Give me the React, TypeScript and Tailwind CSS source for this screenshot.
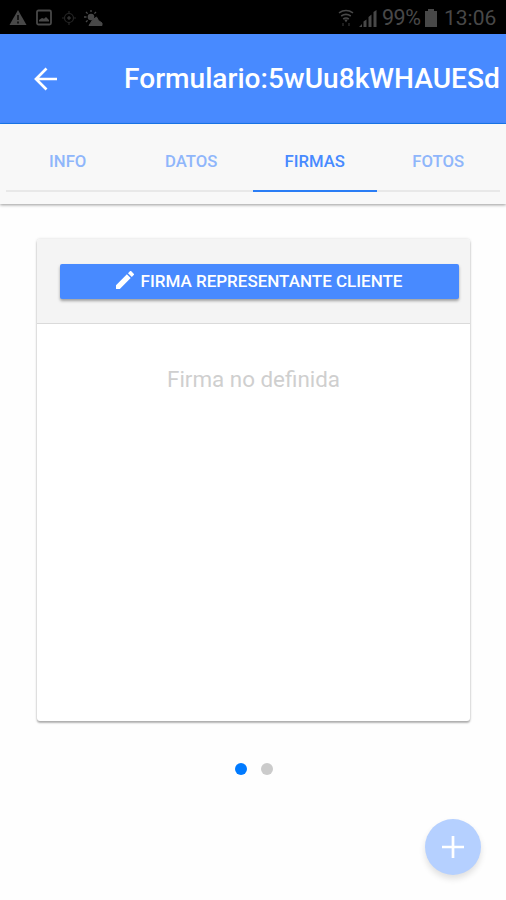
import { useState } from 'react';

const tabs = ['INFO', 'DATOS', 'FIRMAS', 'FOTOS'];

const slides = ['FIRMA REPRESENTANTE CLIENTE', 'FIRMA TÉCNICO'];

function StatusBar() {
  return (
    <div className="flex h-[34px] shrink-0 items-center justify-between bg-black pl-[9px] pr-[10px] pt-px text-[#484848]">
      <div className="flex items-center">
        <svg className="h-[17px] w-[18px]" viewBox="0 0 18 17">
          <path d="M9 1 17.5 16H.5Z" fill="currentColor" />
          <path d="M9 6v5M9 12.5v2" stroke="#111" strokeWidth="1.8" />
        </svg>
        <svg className="ml-[9px] h-[17px] w-[16px]" viewBox="0 0 16 17">
          <rect x="1" y="1.5" width="14" height="14" rx="1.5" fill="none" stroke="currentColor" strokeWidth="1.8" />
          <path d="M3 12.5V11l3-2 2 .8L10 8l3 3v1.5Z" fill="currentColor" />
        </svg>
        <svg className="ml-[10px] h-[14px] w-[14px]" viewBox="0 0 14 14" fill="none" stroke="#262626">
          <circle cx="7" cy="7" r="4.5" strokeWidth="1.2" />
          <circle cx="7" cy="7" r="1.4" fill="#3c3c3c" />
          <path d="M7 0v2.5M7 11.5V14M0 7h2.5M11.5 7H14" strokeWidth="1.2" />
        </svg>
        <svg className="ml-[8px] h-[16px] w-[19px]" viewBox="0 0 19 16">
          <circle cx="7" cy="7" r="3.3" fill="currentColor" />
          <path d="M7 0v2M2 2l1.6 1.6M0 7h2.5M2 12l1.6-1.6M12 2l-1.6 1.6" stroke="currentColor" strokeWidth="1.3" />
          <path d="M5 15.5 8.5 10l4-3 2 3.5 3.5 2.5v2.5Z" fill="currentColor" stroke="currentColor" strokeLinejoin="round" />
        </svg>
      </div>
      <div className="flex items-center">
        <svg className="mr-px h-[18px] w-[16px]" viewBox="0 0 16 18" fill="none" stroke="currentColor" strokeWidth="1.6">
          <path d="M1 3.8Q8-.8 15 3.8M3.2 7Q8 3.8 12.8 7M5.2 10Q8 8 10.8 10" />
          <path d="m6.2 10.5 1.8 3 1.8-3Z" fill="currentColor" stroke="none" />
          <path d="M5 14v3M11 14v3" stroke="#262626" />
        </svg>
        <svg className="ml-[4px] h-[18px] w-[18px]" viewBox="0 0 18 18" fill="currentColor">
          <path d="M0 18 3 15v3ZM4.5 12.5l3-2V18h-3ZM9.5 8l3-2.5V18h-3ZM14.5 3l3-2v17h-3Z" />
        </svg>
        <span className="ml-[5px] w-[39px] whitespace-nowrap text-[21.5px] leading-none tracking-[-0.5px]">99%</span>
        <svg className="ml-[4px] h-[18px] w-[12px]" viewBox="0 0 12 18" fill="currentColor">
          <path d="M3 0h6v2h3v16H0V2h3Z" />
        </svg>
        <span className="ml-[7px] mt-px w-[52px] whitespace-nowrap text-[21px] leading-none">13:06</span>
      </div>
    </div>
  );
}

export default function App() {
  const [activeTab, setActiveTab] = useState('FIRMAS');
  const [slide, setSlide] = useState(0);

  return (
    <div className="relative flex h-[900px] w-[506px] flex-col overflow-hidden bg-[#fefefe] font-['Roboto',sans-serif]">
      <StatusBar />

      {/* Toolbar */}
      <header className="flex h-[90px] shrink-0 items-center border-b border-[#1a7cf5] bg-[#488aff] text-white">
        <button className="ml-[34px] mt-px" aria-label="Volver">
          <svg className="h-[24px] w-[23px]" viewBox="0 0 23 24" fill="none" stroke="currentColor" strokeWidth="2.7">
            <path d="M23 12H2M12.5 1.5 2 12l10.5 10.5" />
          </svg>
        </button>
        <h1 className="ml-[67px] mt-[2px] whitespace-nowrap text-[28.1px] font-medium leading-none">Formulario:5wUu8kWHAUESd</h1>
      </header>

      {/* Tabs */}
      <nav className="z-10 h-[80px] shrink-0 bg-[#f8f8f8] px-[6px] shadow-[0_1px_3px_rgba(0,0,0,0.4)]">
        <div className="flex h-[68px]">
          {tabs.map((tab) => (
            <button
              key={tab}
              onClick={() => setActiveTab(tab)}
              className={`flex-1 border-b-2 pt-[10px] text-[16.7px] font-medium ${
                activeTab === tab
                  ? 'border-[#2a7df5] text-[#488aff]'
                  : 'border-[#e8e8e8] text-[#8fb6fb]'
              }`}
            >
              {tab}
            </button>
          ))}
        </div>
      </nav>

      {/* Signature card */}
      <main className="flex flex-col items-center pt-[35px]">
        <section className="flex h-[482px] w-[433px] flex-col rounded-[3px] bg-white shadow-[0_2px_2px_rgba(0,0,0,0.28),0_0_3px_rgba(0,0,0,0.16)]">
          <div className="h-[85px] rounded-t-[3px] border-b border-[#dadada] bg-[#f4f4f4] px-[23px] pt-[25px]">
            <button className="flex h-[35px] w-[399px] items-center justify-center rounded-[2px] bg-[#488aff] text-[17px] font-medium text-white shadow-[0_2px_3px_rgba(0,0,0,0.35)]">
              <svg className="mb-[3px] mr-[7px] h-[18px] w-[18px]" viewBox="0 0 18 18" fill="currentColor">
                <path d="M0 14.2V18h3.8L14.7 7.1l-3.8-3.8ZM17.7 4.1a1 1 0 0 0 0-1.4L15.3.3a1 1 0 0 0-1.4 0L12 2.2 15.8 6Z" />
              </svg>
              {slides[slide]}
            </button>
          </div>
          <p className="pl-px pt-[41px] text-center text-[22.4px] leading-[28px] text-[#cfcfcf]">Firma no definida</p>
        </section>

        <div className="mt-[42px] flex gap-[14px] pl-px">
          {slides.map((name, index) => (
            <button
              key={name}
              aria-label={name}
              onClick={() => setSlide(index)}
              className={`h-[12px] w-[12px] rounded-full ${index === slide ? 'bg-[#007aff]' : 'bg-[#cbcbcb]'}`}
            />
          ))}
        </div>
      </main>

      {/* Floating button */}
      <button
        aria-label="Agregar"
        className="absolute bottom-[25px] right-[25px] flex h-[56px] w-[56px] items-center justify-center rounded-full bg-[#b5d0ff] text-white shadow-[0_4px_6px_rgba(0,0,0,0.12)]"
      >
        <svg className="h-[22px] w-[22px]" viewBox="0 0 22 22" stroke="currentColor" strokeWidth="2.7">
          <path d="M11 0v22M0 11h22" />
        </svg>
      </button>
    </div>
  );
}
